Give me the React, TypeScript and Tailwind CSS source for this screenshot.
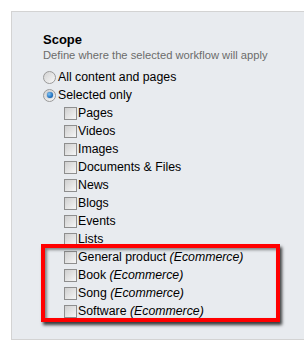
import { ReactNode } from 'react';

type ScopeItem = {
    label: string;
    tag?: string;
};

const CONTENT_TYPES: ScopeItem[] = [
    { label: 'Pages' },
    { label: 'Videos' },
    { label: 'Images' },
    { label: 'Documents & Files' },
    { label: 'News' },
    { label: 'Blogs' },
    { label: 'Events' },
    { label: 'Lists' },
    { label: 'General product', tag: 'Ecommerce' },
    { label: 'Book', tag: 'Ecommerce' },
    { label: 'Song', tag: 'Ecommerce' },
    { label: 'Software', tag: 'Ecommerce' },
];

function Radio({ checked }: { checked?: boolean }) {
    return (
        <span className="mr-[2px] flex h-[13px] w-[13px] shrink-0 items-center justify-center rounded-full border border-[#9a9a9a] bg-[linear-gradient(135deg,#d2d2d2,#f8f8f8)]">
            {checked && (
                <span className="h-[6px] w-[6px] rounded-full bg-[radial-gradient(circle_at_35%_35%,#7fc3f5,#1466b8_70%)] shadow-[0_0_1px_#0a3d70]" />
            )}
        </span>
    );
}

function Checkbox() {
    return (
        <span className="mr-[1px] block h-[13px] w-[13px] shrink-0 border border-[#8e8e8e] bg-[linear-gradient(135deg,#cfcfcf,#f6f6f6)]" />
    );
}

function Row({ control, children }: { control: ReactNode; children: ReactNode }) {
    return (
        <label className="flex h-[18px] items-center whitespace-nowrap text-[12.3px] text-black">
            {control}
            <span>{children}</span>
        </label>
    );
}

export default function App() {
    return (
        <div className="h-[349px] w-[304px] overflow-hidden bg-white font-['Liberation_Sans',Arial,sans-serif]">
            <div className="relative ml-[11px] mt-[11px] h-[329px] w-[300px] border border-[#d3d3d3] bg-[#e8ebef] pl-[31px] pt-[20px]">
                <div className="text-[13px] font-bold leading-[16px] text-black">Scope</div>
                <div className="text-[11.2px] leading-[14px] text-[#6b6b6b]">Define where the selected workflow will apply</div>

                <div className="mt-[6px]">
                    <Row control={<Radio />}>All content and pages</Row>
                    <Row control={<Radio checked />}>Selected only</Row>
                    <div className="pl-[21px]">
                        {CONTENT_TYPES.map((item) => (
                            <Row key={item.label} control={<Checkbox />}>
                                {item.label}
                                {item.tag && <i> ({item.tag})</i>}
                            </Row>
                        ))}
                    </div>
                </div>

                {/* annotation box over the ecommerce types */}
                <div className="pointer-events-none absolute left-[29px] top-[232px] h-[78px] w-[239px] border-[4px] border-[#ff0000] shadow-[2px_3px_3px_rgba(0,0,0,0.75),inset_2px_2px_3px_rgba(0,0,0,0.45)]" />
            </div>
        </div>
    );
}
